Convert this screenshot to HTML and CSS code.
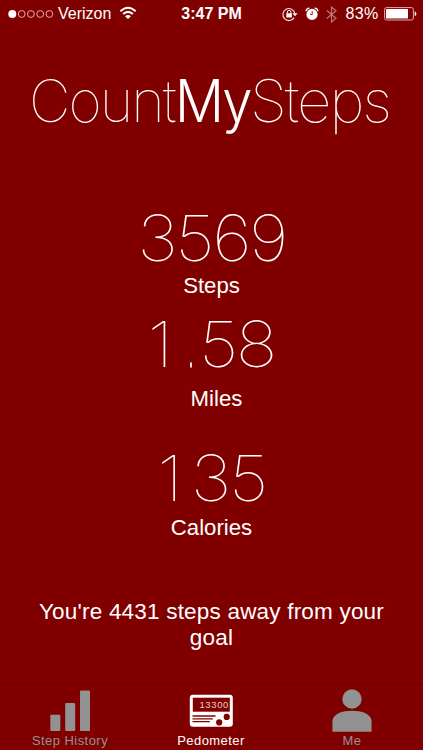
FILE: index.html
```html
<!DOCTYPE html>
<html lang="en">
<head>
<meta charset="utf-8">
<title>CountMySteps</title>
<link rel="stylesheet" href="styles.css">
</head>
<body>
<div class="app">
  <header class="status">
    <div class="carrier">
      <svg class="signal" width="46" height="10" viewBox="0 0 46 10"><circle cx="4.3" cy="5" r="4" fill="#fff"/><g fill="none" stroke="#e9a9a9" stroke-width="1"><circle cx="13.7" cy="5" r="3.4"/><circle cx="22.9" cy="5" r="3.4"/><circle cx="32.2" cy="5" r="3.4"/><circle cx="41.4" cy="5" r="3.4"/></g></svg>
      <span class="carrier-name">Verizon</span>
      <svg class="wifi" width="18" height="14" viewBox="0 0 18 14"><g fill="none" stroke="#fff" stroke-width="2"><path d="M1.4 5.2Q9-1.8 16.6 5.2"/><path d="M4.1 8.1Q9 3.7 13.9 8.1"/></g><path d="M9 13 6.1 10.2Q9 7.9 11.9 10.2Z" fill="#fff"/></svg>
    </div>
    <div class="time">3:47 PM</div>
    <div class="indicators">
      <svg class="lock" width="16" height="14" viewBox="0 0 16 14"><path d="M12.1 10.6A6 6 0 1 1 12.8 6.4" fill="none" stroke="#ffe1e1" stroke-width="1.1"/><path d="M10.4 6.3h5.2L13 9.3Z" fill="#fff"/><rect x="4.3" y="6.3" width="5.6" height="4.2" rx=".5" fill="#fff"/><path d="M5.3 6.5V5.2a1.8 1.8 0 0 1 3.6 0v1.3" fill="none" stroke="#fff" stroke-width="1"/></svg>
      <svg class="alarm" width="14" height="14" viewBox="0 0 14 14"><circle cx="7" cy="7.4" r="5.6" fill="#fff"/><path d="M1.1 4.2A3 3 0 0 1 4.3 1.3M9.7 1.3a3 3 0 0 1 3.2 2.9" fill="none" stroke="#fff" stroke-width="1.4"/><path d="M7.2 4.2v3.5L5 7.2" fill="none" stroke="#800000" stroke-width=".9"/></svg>
      <svg class="bluetooth" width="11" height="17" viewBox="0 0 11 17"><path d="M.8 4.5 10 12.2 5.5 16V1L10 4.8.8 12.5" fill="none" stroke="#bd7878" stroke-width="1.2"/></svg>
      <span class="percent">83%</span>
      <svg class="battery" width="33" height="14" viewBox="0 0 33 14"><rect x=".6" y=".6" width="28.8" height="12.4" rx="1.8" fill="none" stroke="#e7aaaa" stroke-width="1"/><rect x="2" y="2" width="22" height="9.6" rx=".5" fill="#fff"/><path d="M30.7 4.5c2.2.6 2.2 4 0 4.6Z" fill="#fff"/></svg>
    </div>
  </header>
  <h1 class="brand"><span class="count">Count</span><b>My</b><span class="steps">Steps</span></h1>
  <main class="stats">
    <section class="stat stat-steps"><div class="value">3569</div><div class="label">Steps</div></section>
    <section class="stat stat-miles"><div class="value"><span class="one">1</span><span class="dot">.</span>58</div><div class="label">Miles</div></section>
    <section class="stat stat-calories"><div class="value"><span class="one">1</span>35</div><div class="label">Calories</div></section>
    <p class="goal">You're 4431 steps away from your goal</p>
  </main>
  <nav class="tabs">
    <a class="tab tab-history">
      <svg width="42" height="42" viewBox="0 0 42 42" fill="currentColor"><rect x="1.3" y="24.3" width="10" height="16.2" rx="1"/><rect x="16.2" y="12.6" width="10" height="27.9" rx="1"/><rect x="31" y="0" width="10" height="40.5" rx="1"/></svg>
      <span>Step History</span>
    </a>
    <a class="tab tab-pedometer active">
      <svg width="44" height="42" viewBox="0 0 44 42"><rect x=".8" y="4.2" width="43" height="32" rx="3" fill="#fff"/><rect x="3.8" y="7.2" width="37" height="14" fill="#800000"/><path d="M3.5 25.5H26.5M3.5 28.4H23.8M3.5 31.2H20.8" stroke="#800000" stroke-width="1.3"/><circle cx="37.7" cy="26.4" r="3.1" fill="#800000"/><circle cx="30.2" cy="31.9" r="3.1" fill="#800000"/><text x="10.4" y="17.8" class="readout" textLength="29">13300</text></svg>
      <span>Pedometer</span>
    </a>
    <a class="tab tab-me">
      <svg width="42" height="44" viewBox="0 0 42 44" fill="currentColor"><circle cx="21" cy="9.2" r="9.9"/><path d="M1 42.8V31C2.2 24.5 11 21.3 21 21.3S39.8 24.5 41 31V42.8Z"/></svg>
      <span>Me</span>
    </a>
  </nav>
</div>
</body>
</html>
```
FILE: styles.css
```css
* { box-sizing: border-box; }
body { margin: 0; background: #800000; color: #fff; font-family: "Liberation Sans", Arial, sans-serif; }
.app { display: flex; flex-direction: column; width: 423px; height: 750px; overflow: hidden; }
svg { display: block; flex: none; overflow: visible; }
.status { display: grid; grid-template-columns: 1fr 64px 1fr; height: 28px; align-items: center; font-size: 16px; white-space: nowrap; }
.carrier { display: flex; align-items: center; padding-left: 8px; }
.carrier-name { margin-left: 4px; width: 54px; font-size: 16px; }
.wifi { margin-left: 7px; margin-top: -2px; }
.time { text-align: center; font-weight: bold; font-size: 16px; }
.indicators { display: flex; align-items: center; padding-left: 38px; }
.alarm { margin-left: 7px; }
.bluetooth { margin-left: 7px; }
.percent { width: 34px; margin-left: 9px; font-size: 16px; letter-spacing: .3px; }
.battery { margin-left: 4px; }
.brand { display: grid; grid-template-columns: 145.5px 75.5px 1fr; margin: 43px 0 0; padding-left: 29px; height: 60px; line-height: 60px; font-family: Inter, "Liberation Sans", sans-serif; font-size: 58.5px; font-weight: 100; letter-spacing: -2px; white-space: nowrap; }
.brand > * { transform-origin: left center; }
.count { transform: scaleX(.98); }
.brand b { font-weight: 300; transform: scaleX(.93); }
.brand .steps { transform: scaleX(1.03); }
.stats { flex: 1; }
.stat { display: flex; flex-direction: column; align-items: center; }
.value { display: flex; height: 64px; line-height: 64px; font-family: Inter, "Liberation Sans", sans-serif; font-size: 63.5px; font-weight: 100; letter-spacing: -2.3px; white-space: nowrap; transform: scaleX(1.1); }
.one { width: 33.6px; padding-right: 9.5px; display: flex; justify-content: flex-end; }
.dot { width: 16.4px; text-align: center; transform: scale(.5, 1.8); transform-origin: 50% 55px; }
.label { height: 28px; line-height: 28px; font-size: 22.2px; }
.stat-steps { margin-top: 75px; }
.stat-steps .label { margin-top: 2px; }
.stat-miles { margin-top: 12px; }
.stat-miles .value, .stat-calories .value { margin-right: 4px; }
.stat-miles .label { margin: 9px 0 0 10px; }
.stat-calories { margin-top: 33px; }
.stat-calories .label { margin-top: 4px; }
.goal { width: 370px; margin: 57px auto 0; text-align: center; font-size: 22.5px; line-height: 26px; letter-spacing: .2px; }
.tabs { display: grid; grid-template-columns: 140px 142px 138px; height: 66px; border-top: 1px solid #680000; }
.tab { display: flex; flex-direction: column; align-items: center; padding-top: 5px; color: #929292; font-size: 13px; letter-spacing: .45px; }
.tab svg { height: 43px; }
.tab span { line-height: 16px; white-space: nowrap; }
.tab.active { color: #fff; }
.tab-me { padding-left: 2px; }
.readout { font-family: "Liberation Sans", sans-serif; font-size: 9.5px; letter-spacing: 0; fill: #e8caca; }
```
